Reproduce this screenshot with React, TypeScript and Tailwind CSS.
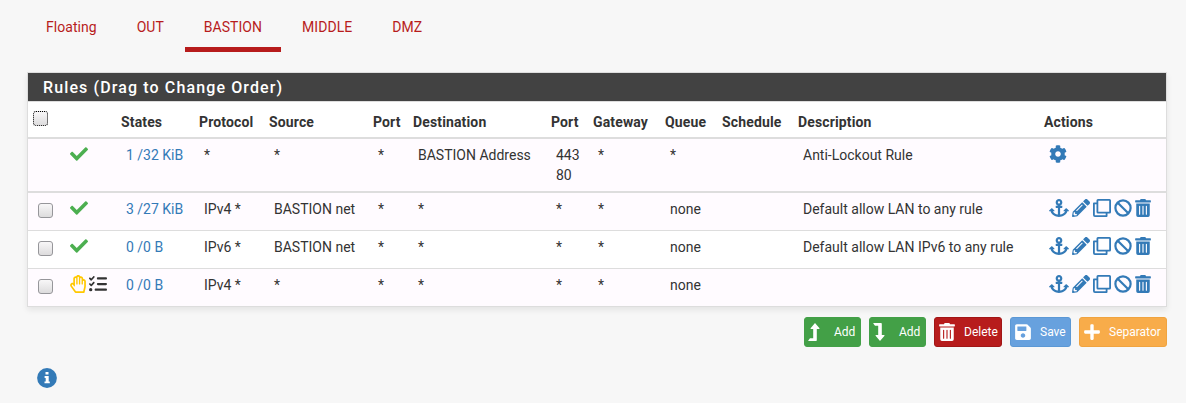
import type { ReactNode } from "react";
import {
  FaAnchor, FaCheck, FaCog, FaPencilAlt, FaPlus, FaRegHandPaper, FaSave, FaTrashAlt,
} from "react-icons/fa";
import { FaListCheck } from "react-icons/fa6";

const tabs = ["Floating", "OUT", "BASTION", "MIDDLE", "DMZ"];

const columns = [
  { label: "", width: "w-[32px]" },
  { label: "", width: "w-[56px]" },
  { label: "States", width: "w-[78px]" },
  { label: "Protocol", width: "w-[70px]" },
  { label: "Source", width: "w-[104px]" },
  { label: "Port", width: "w-[40px]" },
  { label: "Destination", width: "w-[138px]" },
  { label: "Port", width: "w-[42px]" },
  { label: "Gateway", width: "w-[72px]" },
  { label: "Queue", width: "w-[57px]" },
  { label: "Schedule", width: "w-[76px]" },
  { label: "Description", width: "w-[246px]" },
  { label: "Actions", width: "w-[127px]" },
];

type Rule = { kind: "lockout" | "pass" | "reject"; states: string; cells: string[] };

const rules: Rule[] = [
  { kind: "lockout", states: "1 /32 KiB", cells: ["*", "*", "*", "BASTION Address", "443\n80", "*", "*", "", "Anti-Lockout Rule"] },
  { kind: "pass", states: "3 /27 KiB", cells: ["IPv4 *", "BASTION net", "*", "*", "*", "*", "none", "", "Default allow LAN to any rule"] },
  { kind: "pass", states: "0 /0 B", cells: ["IPv6 *", "BASTION net", "*", "*", "*", "*", "none", "", "Default allow LAN IPv6 to any rule"] },
  { kind: "reject", states: "0 /0 B", cells: ["IPv4 *", "*", "*", "*", "*", "*", "none", "", ""] },
];

function Checkbox({ focused = false }: { focused?: boolean }) {
  return (
    <span
      role="checkbox"
      aria-checked="false"
      className={`block size-[15px] rounded-[3px] border bg-linear-to-b from-[#f8f7f8] to-[#dddcdd] ${focused ? "border-dotted border-black" : "border-[#96969a]"}`}
    />
  );
}

function LevelArrow({ down = false }: { down?: boolean }) {
  return (
    <svg viewBox="0 0 12 18" className={`h-[18px] w-3 ${down ? "-scale-y-100" : ""}`} fill="currentColor" aria-hidden="true">
      <path d="M7 0 11.5 5.2Q11.8 6 11 6H8.8V17.2Q8.8 18 8 18H.6Q0 18 .3 17.4L2 15.3H5.2V6H3Q2.2 6 2.6 5.2Z" />
    </svg>
  );
}

function CopyIcon() {
  return (
    <svg viewBox="0 0 18 18" className="size-[18px]" fill="none" stroke="currentColor" strokeWidth="1.8" strokeLinejoin="round" aria-hidden="true">
      <rect x="4.4" y="0.9" width="12.7" height="12.7" rx="0.6" />
      <path d="M4.4 4.4H0.9V16.1Q0.9 17.1 1.9 17.1H13.6V13.6" />
    </svg>
  );
}

function BanIcon() {
  return (
    <svg viewBox="0 0 18 18" className="size-[18px]" fill="none" stroke="currentColor" strokeWidth="2.2" aria-hidden="true">
      <circle cx="9" cy="9" r="7.6" />
      <path d="m3.7 3.7 10.6 10.6" />
    </svg>
  );
}

function InfoIcon() {
  return (
    <svg viewBox="0 0 20 20" className="mt-[20.5px] ml-[10px] size-5" aria-hidden="true">
      <circle cx="10" cy="10" r="9.9" fill="#337ab7" />
      <path d="M8.5 3.9h3v2.7h-3zM7.6 8.1h4.1v5.3h1.1v1.8H7.5v-1.8h1.2V9.9H7.6z" fill="#fff" />
    </svg>
  );
}

function ActionButton({ className, icon, children }: { className: string; icon: ReactNode; children: string }) {
  return (
    <button className={`flex h-[30px] items-center rounded-[3px] border pr-1 pl-[3px] text-[12px] text-white ${className}`}>
      <span className="flex w-[26px] shrink-0 items-center">{icon}</span>
      <span className="flex-1 text-left whitespace-nowrap">{children}</span>
    </button>
  );
}

export default function App() {
  return (
    <div className="h-[403px] overflow-hidden bg-[#f7f7f7] pl-[27px] font-['Roboto',sans-serif] text-[14px] leading-5 text-[#333]">
      <nav className="flex h-[52px] gap-[2px] text-[#b71c1c]">
        {tabs.map((tab) => (
          <a key={tab} className={`h-[52px] px-[19px] pt-[17px] tracking-[0.04px] ${tab === "BASTION" ? "border-b-[5px] border-[#b71c1c]" : ""}`}>
            {tab}
          </a>
        ))}
      </nav>

      <section className="mt-5 w-[1140px] border border-[#ddd] bg-white shadow-[0_3px_6px_rgba(0,0,0,0.08)]">
        <h2 className="h-[28px] bg-[#424242] pl-[15px] text-[16px] leading-[29px] font-medium tracking-[1.12px] text-white">
          Rules (Drag to Change Order)
        </h2>
        <table className="w-full table-fixed border-separate border-spacing-0 border-t border-[#ddd]">
          <thead>
            <tr className="h-[37px]">
              {columns.map((column, index) => (
                <th key={index} className={`${column.width} border-b-2 border-[#ddd] pt-[10px] pl-[5px] text-left align-top font-bold tracking-[0.14px]`}>
                  {index === 0 ? <div className="-mt-px"><Checkbox focused /></div> : column.label}
                </th>
              ))}
            </tr>
          </thead>
          <tbody>
            {rules.map((rule, rowIndex) => (
              <tr
                key={rowIndex}
                className={`align-top [&>td]:border-[#ddd] [&>td]:pt-[6px] [&>td]:pl-[10px] ${rowIndex === 2 ? "bg-white" : "bg-[#fffbff]"} ${rowIndex === 0 ? "h-[54px] [&>td]:border-b-2" : rowIndex === 3 ? "h-[37px]" : "h-[38px] [&>td]:border-b"}`}
              >
                <td>{rule.kind !== "lockout" && <div className="pt-1"><Checkbox /></div>}</td>
                <td>
                  <div className="flex h-[18px] items-center gap-[3px]">
                    {rule.kind === "reject" ? (
                      <>
                        <FaRegHandPaper className="h-[18px] w-4 shrink-0 text-[#ffc800]" />
                        <FaListCheck className="size-[18px] shrink-0" />
                      </>
                    ) : (
                      <FaCheck className="size-[18px] shrink-0 text-[#4caf50]" />
                    )}
                  </div>
                </td>
                <td className="text-[#337ab7]">{rule.states}</td>
                {rule.cells.map((cell, index) => (
                  <td key={index} className="whitespace-pre">{cell}</td>
                ))}
                <td>
                  <div className="flex h-[18px] items-center gap-[3px] text-[#337ab7]">
                    {rule.kind === "lockout" ? (
                      <FaCog className="size-[18px]" />
                    ) : (
                      <>
                        <FaAnchor className="h-[18px] w-5" />
                        <FaPencilAlt className="size-[18px]" />
                        <CopyIcon />
                        <BanIcon />
                        <FaTrashAlt className="h-[18px] w-4" />
                      </>
                    )}
                  </div>
                </td>
              </tr>
            ))}
          </tbody>
        </table>
      </section>

      <div className="mt-[10px] flex w-[1140px] justify-end gap-2">
        <ActionButton className="w-[57px] border-[#43a047] bg-[#43a047]" icon={<LevelArrow />}>Add</ActionButton>
        <ActionButton className="w-[57px] border-[#43a047] bg-[#43a047]" icon={<LevelArrow down />}>Add</ActionButton>
        <ActionButton className="w-[68px] border-[#a11616] bg-[#b71c1c]" icon={<span className="pl-px"><FaTrashAlt className="h-[18px] w-4" /></span>}>Delete</ActionButton>
        <ActionButton className="w-[61px] border-[#5b98d5] bg-[#67a1de]" icon={<FaSave className="size-[18px]" />}>Save</ActionButton>
        <ActionButton className="w-[88px] border-[#f0a440] bg-[#f8ac4a]" icon={<FaPlus className="size-[18px]" />}>Separator</ActionButton>
      </div>
      <InfoIcon />
    </div>
  );
}
